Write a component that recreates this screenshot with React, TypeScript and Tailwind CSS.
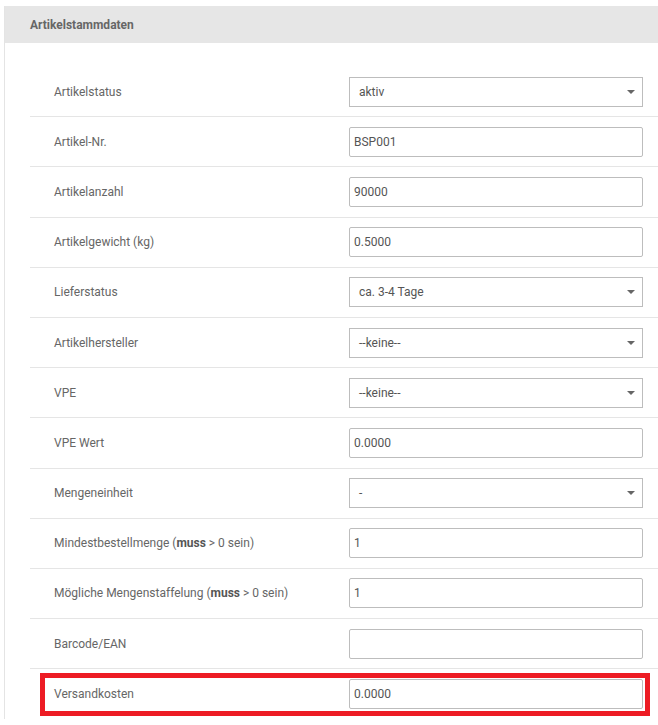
import React from "react";

type Field = {
  label: React.ReactNode;
  kind: "select" | "input";
  value: string;
};

const fields: Field[] = [
  { label: "Artikelstatus", kind: "select", value: "aktiv" },
  { label: "Artikel-Nr.", kind: "input", value: "BSP001" },
  { label: "Artikelanzahl", kind: "input", value: "90000" },
  { label: "Artikelgewicht (kg)", kind: "input", value: "0.5000" },
  { label: "Lieferstatus", kind: "select", value: "ca. 3-4 Tage" },
  { label: "Artikelhersteller", kind: "select", value: "--keine--" },
  { label: "VPE", kind: "select", value: "--keine--" },
  { label: "VPE Wert", kind: "input", value: "0.0000" },
  { label: "Mengeneinheit", kind: "select", value: "-" },
  {
    label: (
      <>
        Mindestbestellmenge (<b className="font-bold text-[#555]">muss</b> &gt; 0 sein)
      </>
    ),
    kind: "input",
    value: "1",
  },
  {
    label: (
      <>
        Mögliche Mengenstaffelung (<b className="font-bold text-[#555]">muss</b> &gt; 0 sein)
      </>
    ),
    kind: "input",
    value: "1",
  },
  { label: "Barcode/EAN", kind: "input", value: "" },
  { label: "Versandkosten", kind: "input", value: "0.0000" },
];

function Control({ kind, value }: { kind: Field["kind"]; value: string }) {
  if (kind === "select") {
    return (
      <div className="flex h-[30px] w-[294px] items-center justify-between border border-[#bdbdbd] bg-white pl-[9px] pr-[7px] text-[12px] text-[#555]">
        <span>{value}</span>
        <svg width="8" height="4" viewBox="0 0 8 4">
          <path d="M0 0 H8 L4 4 Z" fill="#666" />
        </svg>
      </div>
    );
  }
  return (
    <div className="flex h-[30px] w-[294px] items-center rounded-[2px] border border-[#bdbdbd] bg-white pl-[4px] text-[12px] text-[#555]">
      {value}
    </div>
  );
}

export default function App() {
  return (
    <div
      className="min-h-[725px] bg-white pl-[4px] pt-[6px]"
      style={{ fontFamily: "Roboto, 'Liberation Sans', sans-serif" }}
    >
      <div className="border-l border-[#e4e4e4]">
        <div className="flex h-[37px] items-center bg-[#e6e6e6] pl-[25px] text-[12px] font-bold text-[#666]">
          Artikelstammdaten
        </div>
        <div className="pl-[25px] pt-[24px]">
          {fields.map((f, i) => {
            const last = i === fields.length - 1;
            return (
              <div
                key={i}
                className={`relative flex h-[50.2px] items-center ${last ? "" : "border-b border-[#e5e5e5]"}`}
              >
                <div className="w-[319px] pl-[24px] text-[12px] text-[#666]">{f.label}</div>
                <Control kind={f.kind} value={f.value} />
                {last && (
                  <div className="pointer-events-none absolute left-[10px] top-[4px] h-[43px] w-[610px] border-[5px] border-[#ed1c24]" />
                )}
              </div>
            );
          })}
        </div>
      </div>
    </div>
  );
}
